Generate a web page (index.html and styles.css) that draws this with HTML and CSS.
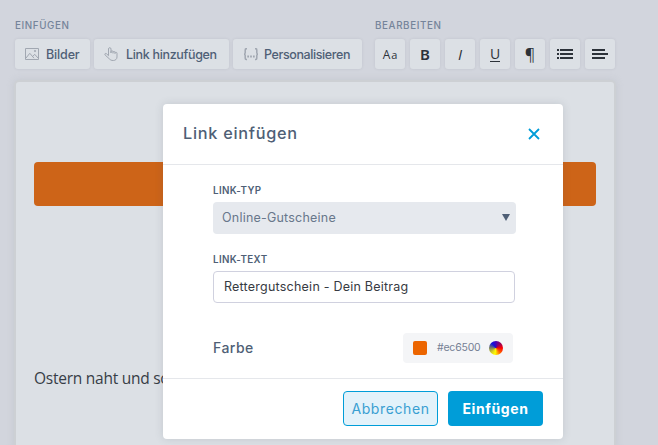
FILE: index.html
```html
<!DOCTYPE html>
<html lang="de">
<head>
<meta charset="utf-8">
<title>Link einfügen</title>
<link rel="stylesheet" href="styles.css">
</head>
<body>
<div class="editor">
  <div class="toolbar">
    <section class="group insert">
      <h2 class="group-title">EINFÜGEN</h2>
      <div class="buttons">
        <button class="tool images"><svg width="14" height="12" viewBox="0 0 14 12"><path d="M.5.5h13v11H.5zM1 10l3.8-4.7L9 10.2M7.7 8.5l2-2.2L13 10"/><circle cx="10" cy="3" r=".7"/></svg><span>Bilder</span></button>
        <button class="tool link"><svg width="14" height="14" viewBox="0 0 14 14"><path d="M4.5 8.7V2C4.500.2 7 .2 7 2v4M7 6V4.600C7 3.500 9 3.500 9 4.600V6.500M9 5.300c0-1.100 2-1.100 2 0V7M11 6c0-1 2-1 2 .2V10c0 2-1.500 3.500-3.700 3.500-2 0-2.900-.5-4-1.700L1.100 8C.2 6.800 1.600 5.900 2.600 6.800l1.900 1.900"/></svg><span>Link hinzufügen</span></button>
        <button class="tool personal"><svg width="16" height="13" viewBox="0 0 16 13"><path d="M4 .7H3.300Q2.200.7 2.200 1.900V4.800Q2.200 6.200 1 6.200 2.200 6.200 2.200 7.600V10.300Q2.200 11.500 3.300 11.500H4M12 .7h.7q1.100 0 1.100 1.200V4.800q0 1.400 1.200 1.400-1.200 0-1.200 1.400v2.700q0 1.200-1.100 1.200H12" stroke-width="1.500"/><path d="M4.300 8.500h1.700M7.150 8.500h1.700M10 8.500h1.700" stroke-width="1.800"/></svg><span>Personalisieren</span></button>
      </div>
    </section>
    <section class="group">
      <h2 class="group-title">BEARBEITEN</h2>
      <div class="buttons format">
        <button class="tool square case"><span>A<small>a</small></span></button>
        <button class="tool square bold">B</button>
        <button class="tool square italic">I</button>
        <button class="tool square underline"><span>U</span></button>
        <button class="tool square para">¶</button>
        <button class="tool square"><svg class="solid" width="16" height="10" viewBox="0 0 16 10"><path d="M0 0h2v2H0zM3 0h13v2H3zM0 4h2v2H0zM3 4h13v2H3zM0 8h2v2H0zM3 8h13v2H3z"/></svg></button>
        <button class="tool square"><svg class="solid" width="16" height="10" viewBox="0 0 16 10"><path d="M0 0h13v2H0zM0 4h16v2H0zM0 8h13v2H0z"/></svg></button>
      </div>
    </section>
  </div>
  <main class="page">
    <div class="banner"></div>
    <p class="copy">Ostern naht und so</p>
  </main>
</div>
<div class="modal" role="dialog">
  <header class="modal-head">
    <h1>Link einfügen</h1>
    <svg class="close" width="12" height="12" viewBox="0 0 12 12"><path d="M1 1l10 10M11 1L1 11"/></svg>
  </header>
  <div class="modal-body">
    <div class="label">LINK-TYP</div>
    <div class="select"><span>Online-Gutscheine</span><svg width="8" height="7" viewBox="0 0 8 7"><path d="M0 0h8L4 7z"/></svg></div>
    <div class="label">LINK-TEXT</div>
    <div class="input"><span>Rettergutschein - Dein Beitrag</span></div>
    <div class="color-row">
      <span class="color-label">Farbe</span>
      <div class="chip"><i class="swatch"></i><span class="hex">#ec6500</span><i class="wheel"></i></div>
    </div>
  </div>
  <footer class="modal-foot">
    <button class="action cancel">Abbrechen</button>
    <button class="action submit">Einfügen</button>
  </footer>
</div>
</body>
</html>
```
FILE: styles.css
```css
* { box-sizing: border-box; }
body {
  margin: 0;
  height: 445px;
  overflow: hidden;
  background: #d2d5dd;
  color: #4f5f76;
  font-family: "Inter", "Liberation Sans", sans-serif;
}
button { font-family: inherit; margin: 0; padding: 0; border: 0; color: inherit; white-space: nowrap; }
.editor { height: 445px; display: flex; flex-direction: column; }
.toolbar { display: flex; gap: 13px; padding: 19px 0 0 15px; height: 82px; flex: none; }
.group-title { margin: 0 0 6px; font-size: 9.8px; line-height: 14px; font-weight: 500; letter-spacing: .62px; color: #75849a; }
.group.insert { width: 347px; }
.buttons { display: flex; gap: 4px; }
.format { gap: 5px; }
.tool {
  height: 30px;
  display: flex;
  align-items: center;
  background: #dce0e5;
  border-radius: 3px;
  box-shadow: 0 0 3px rgba(80, 85, 95, .12);
  font-size: 12.5px;
  font-weight: 500;
  letter-spacing: -.32px;
}
.tool svg { fill: none; stroke: #a1a7b1; stroke-width: 1; flex: none; }
.images { width: 75px; padding-left: 10px; gap: 7px; letter-spacing: -.15px; }
.link { width: 135px; padding-left: 10px; gap: 8px; }
.personal { width: 129px; padding-left: 10px; gap: 5px; letter-spacing: -.4px; }
.square { width: 30px; justify-content: center; color: #2c3239; font-family: "Open Sans", sans-serif; letter-spacing: 0; }
.square svg.solid { fill: #2c3239; stroke: none; }
.case { font-size: 12px; font-weight: 500; }
.case small { font-size: 11px; font-weight: 400; margin-left: 1px; }
.bold { font-size: 15px; font-weight: 600; font-family: "Noto Sans", sans-serif; }
.italic { font-size: 15px; font-style: italic; }
.underline { font-size: 14px; font-weight: 400; }
.underline span { line-height: 14px; border-bottom: 1px solid #2c3239; }
.para { font-size: 16px; }
.page {
  flex: 1;
  width: 598px;
  margin-left: 16px;
  padding: 80px 18px 0;
  background: #dce0e5;
  border-radius: 3px 3px 0 0;
  box-shadow: 0 0 0 2px #cdd0d4, 0 0 6px 3px rgba(175, 180, 185, .3);
}
.banner { height: 44px; border-radius: 4px; background: #cd6418; }
.copy { margin: 160px 0 0; color: #373d45; font: 15.5px/24px "Open Sans", sans-serif; letter-spacing: -.25px; white-space: nowrap; }
.modal {
  position: absolute;
  left: 163px;
  top: 104px;
  width: 400px;
  height: 335px;
  display: flex;
  flex-direction: column;
  background: #fff;
  border-radius: 4px;
  box-shadow: 0 0 8px rgba(70, 80, 95, .16);
}
.modal-head {
  height: 61px;
  display: flex;
  align-items: center;
  justify-content: space-between;
  padding: 0 23px 0 20px;
  border-bottom: 1px solid #e5e7eb;
}
.modal-head h1 { margin: 0; padding-bottom: 2px; font-size: 16.3px; font-weight: 500; line-height: 24px; letter-spacing: .72px; }
.close { fill: none; stroke: #009dd8; stroke-width: 1.8; }
.modal-body { flex: 1; padding: 19px 50px 0; }
.label { font-size: 9.8px; line-height: 14px; font-weight: 600; letter-spacing: .38px; margin-bottom: 4px; white-space: nowrap; }
.select {
  width: 303px;
  height: 32px;
  display: flex;
  align-items: center;
  justify-content: space-between;
  padding: 0 6px 2px 9px;
  margin-bottom: 19px;
  border-radius: 4px;
  background: #e6e9ee;
  font-size: 12.5px;
  letter-spacing: .22px;
  color: #68778b;
}
.select svg { fill: #4f5f76; }
.input {
  width: 302px;
  height: 32px;
  display: flex;
  align-items: center;
  padding: 0 0 1px 10px;
  border: 1px solid #d0d1df;
  border-radius: 4px;
  font-size: 12.5px;
  letter-spacing: .23px;
  color: #363a42;
}
.color-row { display: flex; justify-content: space-between; align-items: center; margin-top: 30px; padding-right: 0; }
.color-label { padding-bottom: 2px; font-size: 14px; font-weight: 500; letter-spacing: .45px; }
.chip { width: 110px; height: 30px; padding: 0 10px; display: flex; align-items: center; background: #f4f5f7; border-radius: 4px; }
.swatch { width: 14px; height: 14px; border-radius: 2px; background: #ec6500; }
.hex { flex: 1; padding: 0 0 1px 10px; font-size: 10.5px; line-height: 14px; letter-spacing: -.2px; color: #748094; }
.wheel { width: 14px; height: 14px; border-radius: 50%; background: conic-gradient(#4600b4, #a00050 50deg, #f00 90deg, #f60 140deg, #ff0 190deg, #d8d020 225deg, #77805d 270deg, #1010e0 320deg, #4600b4); }
.modal-foot {
  height: 61px;
  padding: 12px 20px 0;
  display: flex;
  justify-content: flex-end;
  gap: 10px;
  border-top: 1px solid #e5e7eb;
}
.action { width: 95px; height: 35px; border-radius: 4px; font-size: 14px; letter-spacing: .6px; }
.cancel { background: #e3f2fa; border: 1px solid #009dd8; color: #399fd2; }
.submit { background: #009dd8; color: #fff; font-weight: 700; }
```
